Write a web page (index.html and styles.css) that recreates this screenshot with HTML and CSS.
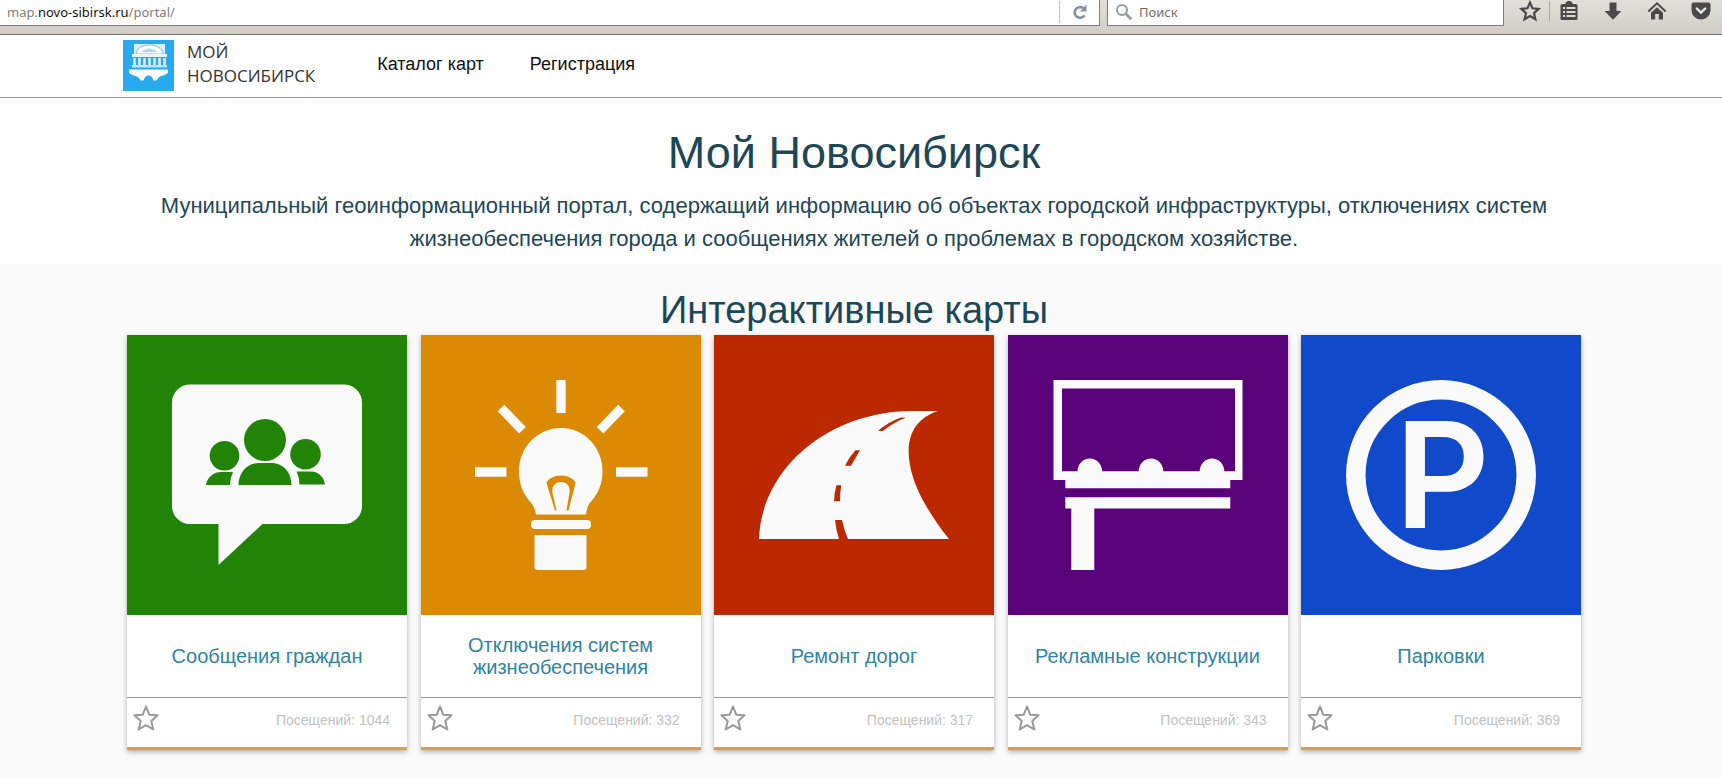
FILE: index.html
```html
<!DOCTYPE html>
<html lang="ru">
<head>
<meta charset="utf-8">
<title>Мой Новосибирск</title>
<link rel="stylesheet" href="styles.css">
</head>
<body>
<svg class="defs" aria-hidden="true">
  <symbol id="star" viewBox="0 0 26 26"><path d="M13 1.500l3.200 8.200 8.300.6-6.200 5.700 2 8.500-7.300-4.300-7.300 4.300 2-8.500-6.200-5.700 8.300-.6z" fill="none" stroke="currentColor" stroke-width="2" stroke-linejoin="round"/></symbol>
</svg>

<div class="toolbar">
  <div class="address">
    <div class="url" role="textbox" aria-label="Адрес">map.<span class="domain">novo-sibirsk.ru</span>/portal/</div>
    <button class="reload" type="button" aria-label="Обновить">
      <svg width="16" height="18" viewBox="0 0 16 18"><path d="M12.500 12.300A5.300 5.300 0 1 1 11.300 5.300" fill="none" stroke="#8795a0" stroke-width="2.600"/><path d="M14.500 1.500v7H7.800z" fill="#8795a0"/></svg>
    </button>
  </div>
  <label class="search">
    <svg width="18" height="18" viewBox="0 0 18 18"><circle cx="7" cy="7" r="5" fill="none" stroke="#959b9f" stroke-width="2"/><path d="M10.800 10.800l5.400 5.400" stroke="#959b9f" stroke-width="2.800"/></svg>
    <input type="text" placeholder="Поиск" aria-label="Поиск">
  </label>
  <div class="tools">
    <div class="tool-pair">
      <button type="button" aria-label="Закладка"><svg width="22" height="22" viewBox="0 0 22 22"><path d="M11 2.600l2.500 5.700 6.100.6-4.600 4.200 1.400 6.200-5.400-3.300-5.400 3.300L7 13.100 2.400 8.900l6.100-.6z" fill="none" stroke="#4a4a4a" stroke-width="2.200"/></svg></button>
      <span class="divider"></span>
      <button type="button" aria-label="Список закладок"><svg width="22" height="22" viewBox="-1 0 22 22"><path d="M1.500 5.500q0-1.500 1.500-1.500H6.500V2.500L9 1h2l2.500 1.500V4H17q1.500 0 1.500 1.500v13q0 1.500-1.500 1.500H3q-1.500 0-1.500-1.500z" fill="#4a4a4a"/><path d="M4 7h2v2H4zM7.500 7h9v2h-9zM4 11h2v2H4zM7.500 11h9v2h-9zM4 15h2v2H4zM7.500 15h9v2h-9z" fill="#dddad5"/></svg></button>
    </div>
    <button type="button" aria-label="Загрузки"><svg width="22" height="22" viewBox="-2 -1 22 22"><path d="M5.500 1.500h7v8.500H17.500L9 18.700.5 10h5z" fill="#4a4a4a"/></svg></button>
    <button type="button" aria-label="Домой"><svg width="22" height="22" viewBox="-1 -1 22 22"><path d="M1.300 10.500L10 2.300l8.700 8.200" fill="none" stroke="#4a4a4a" stroke-width="2"/><path d="M10 6.200l6 5.600V18.500h-4.200V13H8.200v5.500H4v-6.700z" fill="#4a4a4a"/></svg></button>
    <button type="button" aria-label="Pocket"><svg width="22" height="22" viewBox="-1 -1 22 22"><path d="M2.500 1.500h15Q19.500 1.500 19.500 3.500v5.500a9.500 9.500 0 0 1-19 0V3.500q0-2 2-2z" fill="#4a4a4a"/><path d="M5.800 7.500L10 11.600l4.200-4.100" fill="none" stroke="#eceae6" stroke-width="2.400" stroke-linecap="round"/></svg></button>
  </div>
</div>

<header class="header">
  <div class="header-inner">
    <a class="brand" href="#">
      <svg width="51" height="51" viewBox="0 0 51 51">
        <path d="M0 0h51v51H0z" fill="#28aaef"/>
        <path d="M11 4h31v10H11z" fill="#d9effc"/>
        <path d="M13 14C14 2 39 2 40 14z" fill="#fff" stroke="#6fc3f2"/>
        <path d="M18 12q8-7 17 0z" fill="#a8dbf8"/>
        <path d="M9 14h35v3H9z" fill="#e8f6fe"/>
        <path d="M11.500 18v7M16.500 18v7M21.500 18v7M26.500 18v7M31.500 18v7M36.500 18v7M41.500 18v7" stroke="#d9effc" stroke-width="2.600"/>
        <path d="M9 25h35v2.500H9z" fill="#bfe4fa"/>
        <path d="M6 29.500h39v3.500l-4 2.200q-5 .3-7.500 5.300h-3q-1.500-5-5-5t-5 5h-3q-2.500-5-7.500-5.300l-4-2.200z" fill="#fff"/>
      </svg>
      <span class="brand-name">МОЙ<br>НОВОСИБИРСК</span>
    </a>
    <nav class="nav">
      <a href="#">Каталог карт</a>
      <a href="#">Регистрация</a>
    </nav>
  </div>
</header>

<main>
  <section class="hero">
    <h1>Мой Новосибирск</h1>
    <p>Муниципальный геоинформационный портал, содержащий информацию об объектах городской инфраструктуры, отключениях систем жизнеобеспечения города и сообщениях жителей о проблемах в городском хозяйстве.</p>
  </section>

  <section class="maps">
    <h2>Интерактивные карты</h2>
    <div class="cards">
      <article class="card">
        <svg class="picture green" viewBox="0 0 280 280">
          <path d="M63 49.500H217a18 18 0 0 1 18 18V171a18 18 0 0 1-18 18H135.500L91.500 230V189H63a18 18 0 0 1-18-18V67.500a18 18 0 0 1 18-18z" fill="#fafafa"/>
          <g fill="#218406"><circle cx="138" cy="105" r="21"/><circle cx="97.500" cy="120.700" r="14.800"/><circle cx="178.500" cy="119.300" r="15.300"/>
          <path d="M111.500 150c0-12 8-22 20-22h13c12 0 20 10 20 22zM79 150c1-7 7-13 15-13h12q-3 6-3 13zM169.500 136.500H184c8 0 13 6 14 13H172.500q0-7-3-13z"/></g>
        </svg>
        <h3><a href="#">Сообщения граждан</a></h3>
        <div class="card-foot"><button type="button" aria-label="В избранное"><svg width="26" height="26"><use href="#star"/></svg></button><span>Посещений: 1044</span></div>
      </article>
      <article class="card">
        <svg class="picture orange" viewBox="0 0 280 280">
          <path d="M140 45v33M54 137h31.500M195 137h31.500M80 73l21.500 22.300M200.500 73L179 95.300" fill="none" stroke="#fafafa" stroke-width="9.300"/>
          <path d="M140 93c23 0 41.500 19 41.500 43 0 14-5 24-13.500 33q-2 4-3 10.500H115q-1-6-4-10.500c-8.500-9-13-19-13-33 0-24 19-43 42-43z" fill="#fafafa"/>
          <path d="M134 175.500L125.500 148c1-4 8-7.500 14.500-7.500s13.500 3.500 14.500 7.500L147.500 175.500H145.500L148.500 158c1-7-3-11-8.500-11s-9.500 4-8.500 11l4 17.500z" fill="#dc8903"/>
          <rect x="110" y="185" width="60" height="9" rx="4" fill="#fafafa"/><path d="M113.500 200h52v32q0 3-3 3h-46q-3 0-3-3z" fill="#fafafa"/>
        </svg>
        <h3><a href="#">Отключения систем жизнеобеспечения</a></h3>
        <div class="card-foot"><button type="button" aria-label="В избранное"><svg width="26" height="26"><use href="#star"/></svg></button><span>Посещений: 332</span></div>
      </article>
      <article class="card">
        <svg class="picture red" viewBox="0 0 280 280">
          <path d="M45 204C47 137 110 78 195 76H224C200 84 191 103 196 130 200 154 216 180 235 204z" fill="#fafafa"/>
          <path d="M121 185h7q2 10 6 19h-9q-3-9-4-19zM122.500 150.300h4.800q-1.500 8-1.300 16h-6q0-8 2.500-16zM141.500 115.300h4.500l-9 15.500h-6q4-8.500 10.500-15.500zM187 82.500h5q-13 5-23 13.500h-5q10-9 23-13.500z" fill="#bc2800"/>
        </svg>
        <h3><a href="#">Ремонт дорог</a></h3>
        <div class="card-foot"><button type="button" aria-label="В избранное"><svg width="26" height="26"><use href="#star"/></svg></button><span>Посещений: 317</span></div>
      </article>
      <article class="card">
        <svg class="picture purple" viewBox="0 0 280 280">
          <path fill-rule="evenodd" d="M45.500 45H234.500V145H222.300V153.300H57.300V145H45.500zM54 53.500V136.300H69.500a12.300 12.800 0 0 1 24.600 0H130.700a12.300 12.800 0 0 1 24.600 0H191.700a12.300 12.800 0 0 1 24.600 0H227V53.500z" fill="#fafafa"/>
          <path d="M57.300 162.300H222.300V173.500H86.300V235H63.300V173.500H57.300z" fill="#fafafa"/>
        </svg>
        <h3><a href="#">Рекламные конструкции</a></h3>
        <div class="card-foot"><button type="button" aria-label="В избранное"><svg width="26" height="26"><use href="#star"/></svg></button><span>Посещений: 343</span></div>
      </article>
      <article class="card">
        <svg class="picture blue" viewBox="0 0 280 280">
          <circle cx="140" cy="140" r="85.200" fill="none" stroke="#fafafa" stroke-width="19.500"/>
          <text class="parking" x="94" y="193">P</text>
        </svg>
        <h3><a href="#">Парковки</a></h3>
        <div class="card-foot"><button type="button" aria-label="В избранное"><svg width="26" height="26"><use href="#star"/></svg></button><span>Посещений: 369</span></div>
      </article>
    </div>
  </section>
</main>
</body>
</html>
```

FILE: styles.css
```css
* {
  box-sizing: border-box;
}

body {
  margin: 0;
  min-height: 100vh;
  background: #fafafa;
  font-family: "Liberation Sans", Arial, sans-serif;
  color: #1d4757;
}

h1, h2, h3, p {
  margin: 0;
  font-weight: 400;
}

a {
  color: inherit;
  text-decoration: none;
}

button {
  display: flex;
  padding: 0;
  border: 0;
  background: none;
}

.defs {
  position: absolute;
  width: 0;
  height: 0;
}

/* Browser toolbar */
.toolbar {
  display: flex;
  align-items: flex-start;
  height: 35px;
  background: linear-gradient(#e2dfda, #d2cec6);
  border-bottom: 1px solid #77756f;
  font-family: "Noto Sans", sans-serif;
  font-size: 13px;
}

.address,
.search {
  display: flex;
  align-items: center;
  height: 26px;
  padding-bottom: 2px;
  background: #fff;
  border: 1px solid #7f7f7a;
  border-top: 0;
}

.address {
  flex: 1;
  border-left: 0;
  padding-left: 7px;
}

.url {
  flex: 1;
  line-height: 22px;
  color: #808080;
}

.domain {
  color: #111;
}

.reload {
  width: 40px;
  height: 22px;
  align-items: center;
  justify-content: center;
  border-left: 1px solid #c4c4c4;
}

.search {
  width: 397px;
  margin-left: 7px;
  padding-left: 7px;
  gap: 6px;
}

.search svg {
  flex: none;
}

.search input {
  flex: 1;
  min-width: 0;
  padding: 0;
  border: 0;
  outline: 0;
  background: none;
  font: inherit;
}

.search input::placeholder {
  color: #6d6d6d;
  opacity: 1;
}

.tools,
.tool-pair {
  display: flex;
  align-items: center;
}

.tools {
  gap: 22px;
  width: 218px;
  height: 22px;
  padding-left: 15px;
}

.tool-pair {
  gap: 8px;
}

.divider {
  width: 1px;
  height: 20px;
  background: #aaa69f;
}

/* Site header */
.header {
  background: #fff;
  border-bottom: 1px solid #9a9d9d;
}

.header-inner {
  display: flex;
  height: 62px;
  padding: 0 123px;
}

.brand {
  display: flex;
  align-items: flex-start;
  gap: 13px;
  padding-top: 5px;
}

.brand-name {
  font-family: "Open Sans", sans-serif;
  font-size: 17px;
  line-height: 24px;
  color: #333;
}

.nav {
  display: flex;
  gap: 46px;
  margin-left: 62px;
  padding-top: 18px;
  font-size: 18px;
  line-height: 22px;
  color: #111;
}

/* Intro */
.hero {
  padding: 22px 134px 9px 120px;
  background: #fefefe;
  text-align: center;
}

.hero h1 {
  font-size: 45px;
  line-height: 66px;
}

.hero p {
  padding: 3px 20px 0;
  font-size: 22px;
  line-height: 33px;
}

/* Map catalogue */
.maps {
  padding: 21px 141px 24px 127px;
}

.maps h2 {
  text-align: center;
  font-size: 38px;
  line-height: 50px;
}

.cards {
  display: flex;
  flex-wrap: wrap;
  justify-content: space-between;
  gap: 13px;
}

.card {
  width: 280px;
  background: #fff;
  border-bottom: 3px solid #e2984a;
  box-shadow: 0 2px 5px rgba(0, 0, 0, 0.3);
}

.picture {
  display: block;
  width: 100%;
  aspect-ratio: 1;
}

.green { background: #218406; }
.orange { background: #dc8903; }
.red { background: #bc2800; }
.purple { background: #590279; }
.blue { background: #1049c9; }

.parking {
  fill: #fafafa;
  font: 600 147px Inter, "Liberation Sans", sans-serif;
}

.card h3 {
  display: flex;
  align-items: center;
  justify-content: center;
  height: 82px;
  padding: 0 24px;
  text-align: center;
  font-size: 20px;
  line-height: 22px;
  color: #31849f;
}

.card-foot {
  display: flex;
  justify-content: space-between;
  height: 50px;
  padding-left: 6px;
  border-top: 1px solid #999;
}

.card-foot button {
  padding-top: 7px;
  color: #999;
}

.card-foot span {
  width: 148px;
  text-align: center;
  font-size: 14px;
  line-height: 44px;
  color: #c2c2c2;
}
```
